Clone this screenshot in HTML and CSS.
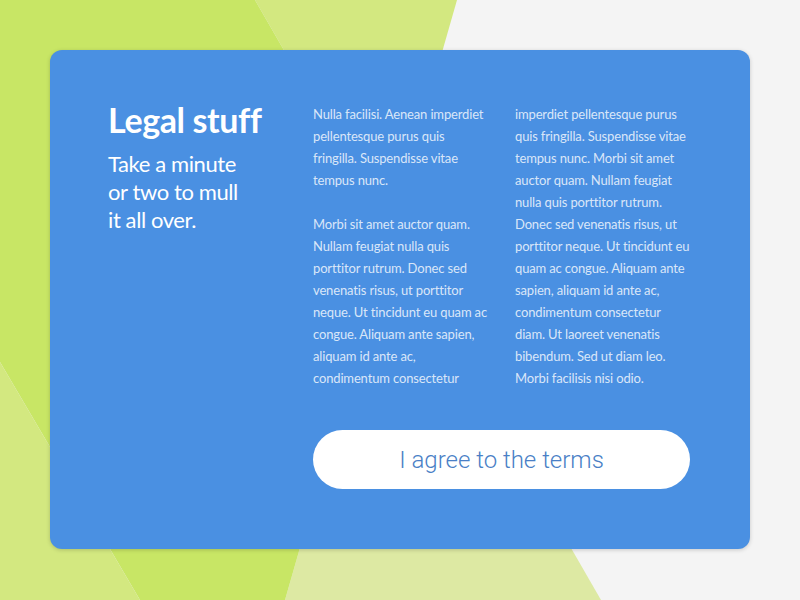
FILE: index.html
```html
<!DOCTYPE html>
<html lang="en">
<head>
<meta charset="utf-8">
<title>Legal stuff</title>
<link rel="stylesheet" href="styles.css">
</head>
<body>
<svg class="backdrop" width="800" height="600" viewBox="0 0 800 600" aria-hidden="true">
  <rect width="800" height="600" fill="#f4f4f4"/>
  <polygon points="255,0 457,0 390,234" fill="#d3e880"/>
  <polygon points="390,234 601,600 285,600" fill="#dde9a3"/>
  <polygon points="0,0 255,0 390,234 285,600 140,600 0,362" fill="#c8e665"/>
  <polygon points="0,362 140,600 0,600" fill="#d3e880"/>
</svg>
<main class="card">
  <header class="intro">
    <h1 class="title">Legal stuff</h1>
    <p class="lead">Take a minute<br>or two to mull<br>it all over.</p>
  </header>
  <section class="terms">
    <div class="columns">
      <div class="col">
        <p>Nulla facilisi. Aenean imperdiet<br>pellentesque purus quis<br>fringilla. Suspendisse vitae<br>tempus nunc.</p>
        <p>Morbi sit amet auctor quam.<br>Nullam feugiat nulla quis<br>porttitor rutrum. Donec sed<br>venenatis risus, ut porttitor<br>neque. Ut tincidunt eu quam ac<br>congue. Aliquam ante sapien,<br>aliquam id ante ac,<br>condimentum consectetur</p>
      </div>
      <div class="col">
        <p>imperdiet pellentesque purus<br>quis fringilla. Suspendisse vitae<br>tempus nunc. Morbi sit amet<br>auctor quam. Nullam feugiat<br>nulla quis porttitor rutrum.<br>Donec sed venenatis risus, ut<br>porttitor neque. Ut tincidunt eu<br>quam ac congue. Aliquam ante<br>sapien, aliquam id ante ac,<br>condimentum consectetur<br>diam. Ut laoreet venenatis<br>bibendum. Sed ut diam leo.<br>Morbi facilisis nisi odio.</p>
      </div>
    </div>
    <button class="agree" type="button">I agree to the terms</button>
  </section>
</main>
</body>
</html>
```
FILE: styles.css
```css
html, body {
  margin: 0;
  padding: 0;
}
body {
  width: 800px;
  height: 600px;
  position: relative;
  overflow: hidden;
  padding: 50px;
  box-sizing: border-box;
  font-family: "Lato", "Liberation Sans", sans-serif;
}
.backdrop {
  position: absolute;
  left: 0;
  top: 0;
  z-index: 0;
}
.card {
  position: relative;
  z-index: 1;
  width: 700px;
  height: 499px;
  box-sizing: border-box;
  background: #4a90e2;
  border-radius: 12px;
  box-shadow: 0 1px 4px rgba(0, 0, 0, 0.18);
  display: flex;
  padding: 50px 60px 60px 58px;
  color: #fff;
}
.intro {
  width: 205px;
  flex: none;
}
.title {
  margin: 0;
  font-size: 34px;
  font-weight: 700;
  line-height: 40px;
  letter-spacing: -0.4px;
}
.lead {
  margin: 10px 0 0;
  font-size: 22px;
  font-weight: 400;
  line-height: 28px;
  letter-spacing: -0.4px;
}
.terms {
  width: 377px;
  display: flex;
  flex-direction: column;
  padding-top: 3px;
}
.columns {
  display: flex;
  gap: 22px;
}
.col {
  width: 180px;
  flex: none;
}
.col p {
  margin: 0 0 22px;
  font-size: 13px;
  line-height: 22px;
  letter-spacing: -0.15px;
  color: rgba(255, 255, 255, 0.8);
  white-space: nowrap;
}
.col p:last-child {
  margin-bottom: 0;
}
.agree {
  margin-top: 41px;
  height: 60px;
  border: none;
  border-radius: 30px;
  background: #fff;
  color: #4a7fc6;
  font-family: "Roboto", sans-serif;
  font-weight: 300;
  font-size: 24px;
  cursor: pointer;
  padding: 0;
}
```
